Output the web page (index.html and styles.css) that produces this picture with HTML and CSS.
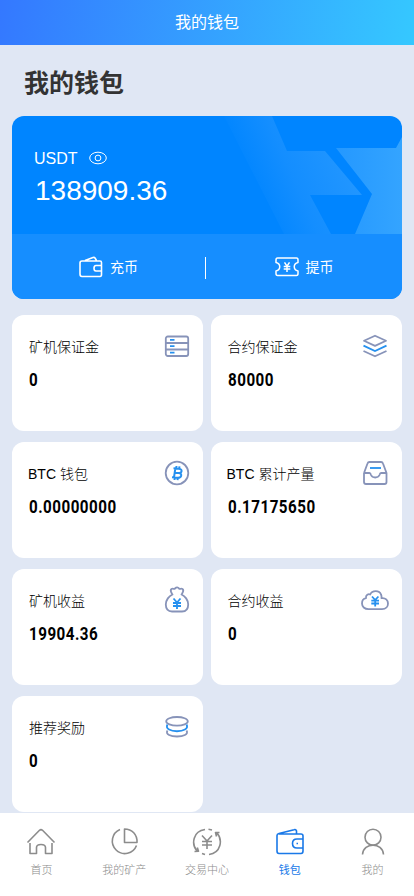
FILE: index.html
```html
<!DOCTYPE html>
<html lang="zh-CN">
<head>
<meta charset="utf-8">
<meta name="viewport" content="width=device-width, initial-scale=1">
<title>我的钱包</title>
<link rel="stylesheet" href="styles.css">
</head>
<body>
<div class="app">
  <header class="topbar">我的钱包</header>
  <main class="content">
    <h1 class="title">我的钱包</h1>
    <section class="balance">
      <svg class="pattern" viewBox="0 0 200 118" width="200" height="118" aria-hidden="true">
        <defs>
          <linearGradient id="band" gradientUnits="userSpaceOnUse" x1="42" y1="62" x2="160" y2="10"><stop offset="0" stop-color="#0085ff"/><stop offset=".35" stop-color="#148eff"/><stop offset="1" stop-color="#289aff"/></linearGradient>
          <linearGradient id="wing" x1="0" y1="0" x2="1" y2="0"><stop offset="0" stop-color="#2498ff"/><stop offset="1" stop-color="#34a4ff"/></linearGradient>
        </defs>
        <path d="M22 0H70L85 35H123L160 79H108L129 118H82Z" fill="url(#band)"/>
        <path d="M134 32H194L200 21V118H153L170 78Z" fill="url(#wing)"/>
      </svg>
      <div class="amount">
        <div class="currency"><span>USDT</span>
          <svg width="18" height="14" viewBox="0 0 18 14" fill="none" stroke="currentColor"><ellipse cx="9" cy="7" rx="8.300" ry="5.800"/><circle cx="9" cy="7" r="2.900"/></svg>
        </div>
        <div class="total">138909.36</div>
      </div>
      <div class="actions">
        <div class="action">
          <svg width="24" height="22" viewBox="0 0 24 22" fill="none" stroke="currentColor" stroke-width="1.600" stroke-linejoin="round"><path d="M22.500 9V6.500Q22.500 5 21 5H3Q1 5 1 7V18Q1 20.500 3 20.500H21Q22.500 20.500 22.500 18.500V15M22.500 9.500H17Q15 9.500 15 12.200T17 15H22.500ZM6 4.500L14 1.500Q15.300 1 16 2L17.500 4.500"/></svg>
          <span>充币</span>
        </div>
        <div class="action">
          <svg width="24" height="20" viewBox="0 0 24 20" fill="none" stroke="currentColor" stroke-width="1.500" stroke-linejoin="round"><path d="M2.500 1H21.500Q23 1 23 3V5.500C18 6.500 18 13 23 14V16.500Q23 18.500 21.500 18.500H2.500Q1 18.500 1 16.500V14C6 13 6 6.500 1 5.500V3Q1 1 2.500 1Z"/><path d="M9.500 5.300L12 9.200L14.500 5.300M12 9.200V15M8.700 9.400H15.300M8.700 12H15.300"/></svg>
          <span>提币</span>
        </div>
      </div>
    </section>

    <section class="grid">
      <article class="card">
        <div class="text"><div class="label">矿机保证金</div><div class="value">0</div></div>
        <svg class="icon" viewBox="0 0 28 28"><g class="g"><rect x="2.800" y="4.500" width="22.400" height="19.500" rx="2"/><path d="M3 11H25M3 17.500H25"/></g><path class="b" d="M7 7.800H11.500M7 14.200H11.500M7 20.700H11.500"/></svg>
      </article>
      <article class="card">
        <div class="text"><div class="label">合约保证金</div><div class="value">80000</div></div>
        <svg class="icon" viewBox="0 0 28 28"><path class="g" d="M14 3.700L25 8.800L14 13.900L3 8.800ZM2.500 19L14 24.300L25.500 19"/><path class="b" d="M2.500 13.600L14 19L25.500 13.600"/></svg>
      </article>
      <article class="card">
        <div class="text"><div class="label latin">BTC 钱包</div><div class="value">0.00000000</div></div>
        <svg class="icon" viewBox="0 0 28 28"><circle class="g" cx="14" cy="14" r="11.300"/><path class="b bold" d="M10.500 9.300L16 9.700C20 10.300 19 14.300 15.500 13.900L11.500 13.700M15.500 13.900C20 14.500 18.500 19 14.500 18.700L9 18.300M12.300 9.500L11 18.500M13.500 7L13.200 9.500M16.500 7.300L16.200 9.700M11.800 18.500L11.500 21M14.800 18.700L14.500 21.200"/></svg>
      </article>
      <article class="card">
        <div class="text"><div class="label latin">BTC 累计产量</div><div class="value">0.17175650</div></div>
        <svg class="icon" viewBox="0 0 28 28"><path class="g" d="M3 14L6.500 4.500Q7 3 8.500 3H20Q21.500 3 22 4.500L25.500 14V23Q25.500 25 23.500 25H5Q3 25 3 23V14H8.500Q9.500 14 10 16Q11 18.500 14.200 18.500T18.500 16Q19 14 20 14H25.500"/><path class="b" d="M9 9H20"/></svg>
      </article>
      <article class="card">
        <div class="text"><div class="label">矿机收益</div><div class="value">19904.36</div></div>
        <svg class="icon" viewBox="0 0 28 28"><path class="g" d="M9.500 8.500C8 6 6.500 4.500 8.500 3C10 2 11 3.500 12 2.500C13.500 1 15 1 16 2.500C17 3.500 18 2 19.500 3C21.500 4.500 20 6 18.500 8.500C22 10 25.200 14 25.200 18.500C25.200 23 23 25.500 19 25.500H9C5 25.500 2.800 23 2.800 18.500C2.800 14 6 10 9.500 8.500Z"/><path class="b" d="M10.500 12.500L14 16.500L17.500 12.500M14 16.500V23M10 17H18M10 20H18"/></svg>
      </article>
      <article class="card">
        <div class="text"><div class="label">合约收益</div><div class="value">0</div></div>
        <svg class="icon" viewBox="0 0 28 28"><path class="g" d="M7.500 23.200C3.500 23.200 1 20.500 1 17.500C1 14.500 3 12.500 5 12.200C4.500 9 7.500 7.500 9.200 8.500C11 4 18.500 4 20 8.500C20.800 10 20.500 12 20.500 12.200C24.500 11.500 27 14.500 27 17.500C27 20.500 25 23.200 21 23.200Z"/><path class="b" d="M11 10.500L14.200 14L17.400 10.500M14.200 14V20.500M10.300 14.700H18M10.300 17.500H18"/></svg>
      </article>
      <article class="card">
        <div class="text"><div class="label">推荐奖励</div><div class="value">0</div></div>
        <svg class="icon" viewBox="0 0 28 28"><ellipse class="g" cx="14" cy="8.300" rx="10.800" ry="4.300"/><path class="g" d="M4.500 17.500C-.5 25.500 28.500 25.500 23.500 17.500"/><path class="b" d="M4.500 11.500C-.5 20.500 28.500 20.500 23.500 11.500"/></svg>
      </article>
    </section>
  </main>

  <nav class="tabs">
    <a class="tab"><svg viewBox="0 0 30 30"><path d="M1.500 15.500L13.500 3.300Q15 2 16.500 3.300L28.500 15.500M4 16V26.500H10.500V20.500Q10.500 17.500 15 17.500T19.500 20.500V26.500H26V16"/></svg><span>首页</span></a>
    <a class="tab"><svg viewBox="0 0 30 30"><path d="M11 2.500A12.500 12.500 0 1 0 27.500 18.500M15.500 2V15.500H28C28.500 7.500 23 2 15.500 2Z"/></svg><span>我的矿产</span></a>
    <a class="tab"><svg viewBox="0 0 30 30"><path d="M13 2.500C1 4-1 17 5 24M2.500 24.500L6.500 24.300L5.300 20.500M17 27.500C29 26 31 13 25 6M27.500 5.500H23.500L24.500 9.500M16.500 2.300L20 3M10 26.500L13 27.500M10 8.500L15 14L20 8.500M15 14V22M10 14.500H20M10 18H20"/></svg><span>交易中心</span></a>
    <a class="tab active"><svg viewBox="0 0 30 30"><path d="M4 7H26Q28 7 28 9V24Q28 26.500 26 26.500H4Q2 26.500 2 24V8.500Q2 7 4 6.500L19 2.700Q21 2 21.500 4V7M28 12H22Q17.500 12 17.500 16.500T22 21H28M21.500 16.500H23"/></svg><span>钱包</span></a>
    <a class="tab"><svg viewBox="0 0 30 30"><circle cx="15" cy="10.200" r="8"/><path d="M4.500 27.500C5.500 15 24.500 15 25.500 27.500"/></svg><span>我的</span></a>
  </nav>
</div>
</body>
</html>
```
FILE: styles.css
```css
* { box-sizing: border-box; }
body {
  margin: 0;
  background: #e0e7f4;
  color: #000;
  font-family: "Liberation Sans", "Noto Sans CJK SC", sans-serif;
}
svg { display: block; flex: none; }
.app {
  height: 896px;
  display: flex;
  flex-direction: column;
  overflow: hidden;
}
.topbar {
  height: 45px;
  flex: none;
  color: #fff;
  font-size: 16px;
  line-height: 45px;
  text-align: center;
  background: linear-gradient(100deg, #3478ff, #35c8ff);
}
.content { flex: 1; padding: 0 12px; min-height: 0; }
.title {
  margin: 0;
  height: 71px;
  padding: 1px 0 0 12px;
  font-size: 25px;
  line-height: 74px;
  color: #333;
}
.balance {
  position: relative;
  height: 183px;
  border-radius: 12px;
  overflow: hidden;
  color: #fff;
  background: #0085ff;
}
.pattern { position: absolute; top: 0; right: 0; }
.amount { height: 118px; padding: 33px 0 0 22px; }
.currency {
  display: flex;
  align-items: center;
  gap: 11px;
  height: 20px;
  font-size: 16px;
}
.currency svg { margin-bottom: 2px; }
.total { margin-top: 4px; padding-left: 1px; font-size: 28px; line-height: 36px; }
.actions {
  position: relative;
  display: grid;
  grid-template-columns: 193px 1fr;
  height: 65px;
  background: #168eff;
}
.action {
  display: flex;
  align-items: center;
  justify-content: center;
  gap: 7px;
  font-size: 14px;
}
.action span { padding-bottom: 2px; }
.action + .action { padding-left: 1px; }
.action + .action::before {
  content: "";
  position: absolute;
  left: 193px;
  top: 23px;
  width: 1px;
  height: 22px;
  background: #fff;
}
.grid {
  display: grid;
  grid-template-columns: 1fr 1fr;
  grid-auto-rows: 116px;
  gap: 11px 8px;
  margin-top: 16px;
}
.card {
  display: flex;
  justify-content: space-between;
  padding: 17px 12px 0 17px;
  border-radius: 12px;
  background: #fff;
}
.card:nth-child(even) { padding: 17px 13.5px 0 16.5px; }
.label { font-size: 14px; line-height: 30px; font-weight: 300; white-space: nowrap; }
.latin { margin-left: -1px; }
.value {
  width: max-content;
  margin-top: 6px;
  font: bold 18.5px/24px Roboto, "Liberation Sans", sans-serif;
  letter-spacing: .6px;
  transform: scaleX(.82);
  transform-origin: left;
}
.icon { width: 28px; height: 28px; fill: none; }
.g { stroke: #8793b9; stroke-width: 1.800; stroke-linejoin: round; }
.b { stroke: #2590ef; stroke-width: 1.800; }
.bold { stroke-width: 2; }
.tabs {
  display: grid;
  grid-template-columns: repeat(5, 1fr);
  flex: none;
  height: 83px;
  background: #fff;
}
.tab {
  display: flex;
  flex-direction: column;
  align-items: center;
  padding-top: 14px;
  color: #8c8c8c;
  font-size: 11px;
  line-height: 16px;
  font-weight: 300;
}
.tab svg {
  width: 30px;
  height: 30px;
  margin-bottom: 5px;
  fill: none;
  stroke: currentColor;
  stroke-width: 1.600;
  stroke-linejoin: round;
}
.tab.active { color: #1a79e8; font-weight: 400; }
```
